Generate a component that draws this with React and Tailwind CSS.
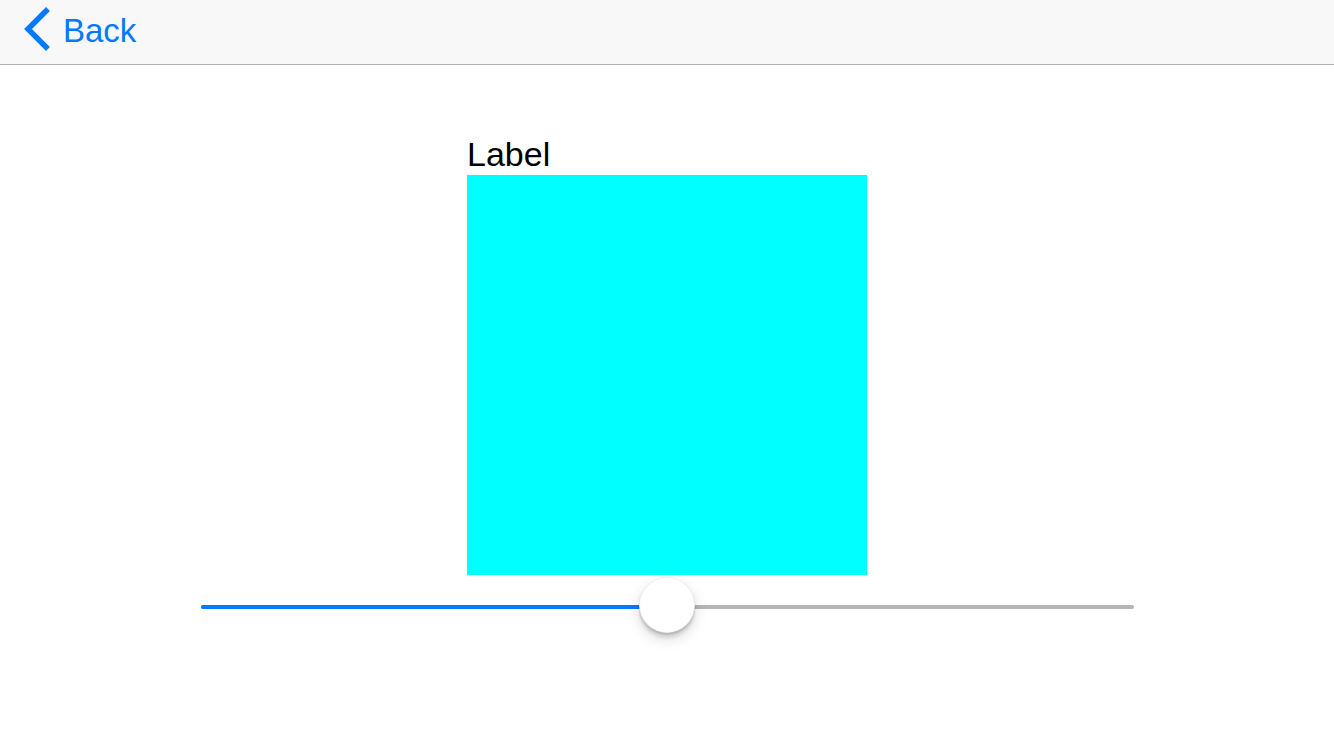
import React from 'react';

function BackChevron() {
  return (
    <svg width="30" height="46" viewBox="0 0 30 46" className="block">
      <polyline points="25,5 7,23 25,41" fill="none" stroke="#007aff" strokeWidth="5.5" strokeLinecap="square" strokeLinejoin="miter" />
    </svg>
  );
}

function Slider({ value }) {
  return (
    <div className="relative h-[56px] w-[933px]">
      <div className="absolute left-0 right-0 top-[28px] h-[4px] rounded-full bg-[#b6b6b6]" />
      <div className="absolute left-0 top-[28px] h-[4px] rounded-full bg-[#007aff]" style={{ width: `${28 + value * 877}px` }} />
      <div
        className="absolute top-0 h-[56px] w-[56px] rounded-full bg-white border border-[rgba(0,0,0,0.06)] shadow-[0_6px_14px_rgba(0,0,0,0.15),0_2px_2px_rgba(0,0,0,0.16),0_6px_2px_rgba(0,0,0,0.06)]"
        style={{ left: `${value * 877}px` }}
      />
    </div>
  );
}

export default function App() {
  return (
    <div className="w-[1334px] h-[750px] bg-white font-['Liberation_Sans',Arial,sans-serif] overflow-hidden">
      <div className="h-[65px] bg-[#f8f8f8] border-b border-[#b2b2b2] flex items-center pl-[21px]">
        <div className="-mt-[7px]">
          <BackChevron />
        </div>
        <span className="ml-[12px] text-[33px] leading-none text-[#007aff] -mt-[4px]">Back</span>
      </div>
      <div className="flex flex-col items-center pt-[69px]">
        <div className="w-[400px]">
          <div className="text-[34px] leading-[40px] text-black">Label</div>
          <div className="mt-[1px] h-[400px] w-[400px] bg-[#00ffff]" />
        </div>
        <div className="mt-[2px]">
          <Slider value={0.5} />
        </div>
      </div>
    </div>
  );
}
